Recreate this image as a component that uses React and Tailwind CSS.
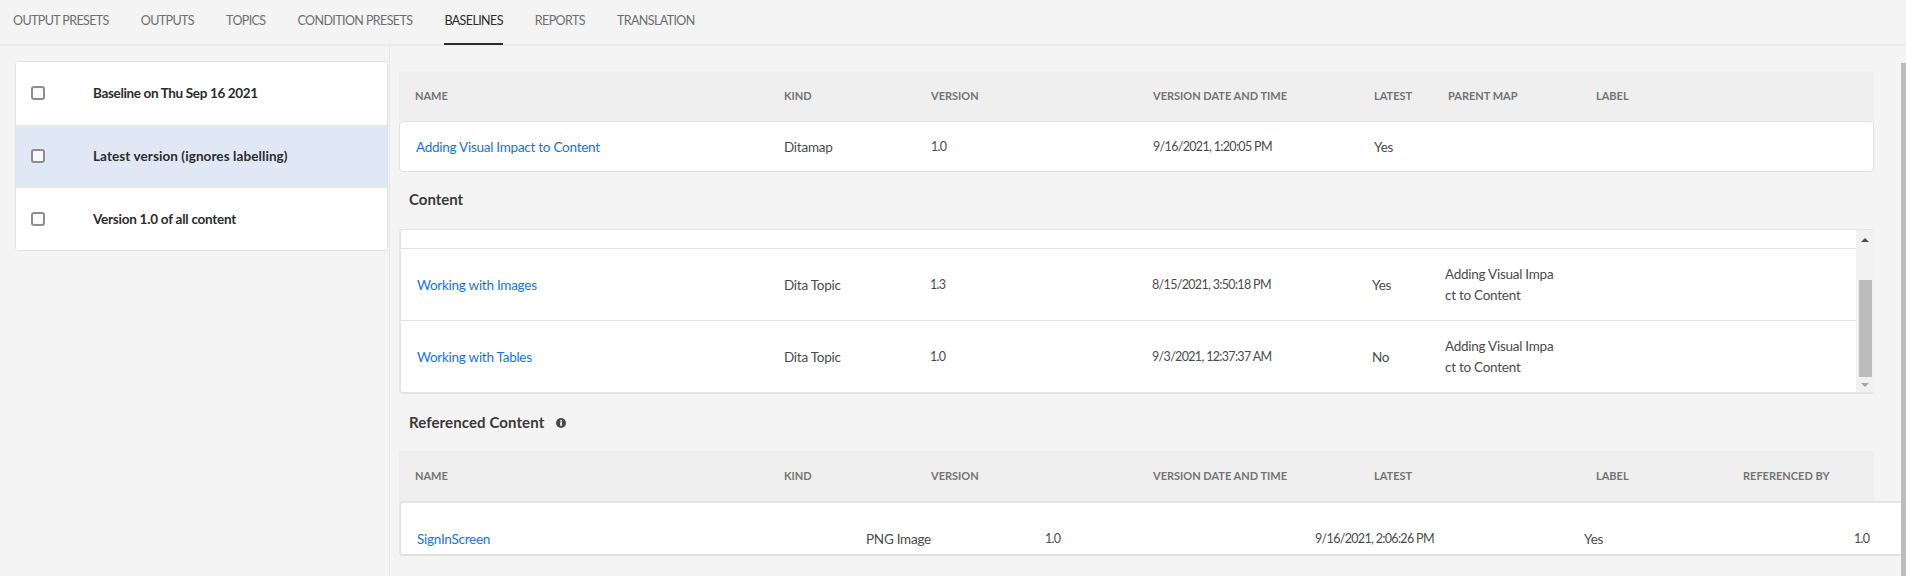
const F = { fontFamily: 'Lato, "Noto Sans", sans-serif' };

const tabs = ["OUTPUT PRESETS", "OUTPUTS", "TOPICS", "CONDITION PRESETS", "BASELINES", "REPORTS", "TRANSLATION"];
const baselines = [
  ["Baseline on Thu Sep 16 2021", false, "tracking-[-0.35px]"],
  ["Latest version (ignores labelling)", true, "tracking-[0.09px]"],
  ["Version 1.0 of all content", false, "tracking-[-0.24px]"],
];
const cols = "grid-cols-[369px_147px_222px_221px_74px_148px_147px_1fr]";

function Num({ children }) {
  return <div className="text-[12.5px] leading-[20px] tracking-[-0.67px]">{children}</div>;
}

function HeaderRow({ labels }) {
  return (
    <div className={`grid ${cols} mr-[27px] h-[50px] items-center bg-[#efefef] pl-[16px] text-[11px] font-bold text-[#747474]`}>
      {labels.map((l, i) => (
        <div key={i} className="min-w-0 whitespace-nowrap">{l}</div>
      ))}
    </div>
  );
}

function ContentRow({ name, kind, version, date, latest }) {
  return (
    <div className="grid h-[72px] grid-cols-[367px_146px_222px_220px_73px_120px] items-center border-b border-[#e1e1e1] pl-[16px] text-[13.5px] leading-[20px] tracking-[-0.26px] text-[#4b4b4b]">
      <a className="text-[#1473e6]">{name}</a>
      <div>{kind}</div>
      <Num>{version}</Num>
      <Num>{date}</Num>
      <div>{latest}</div>
      <div className="leading-[21px]">
        Adding Visual Impa
        <br />
        ct to Content
      </div>
    </div>
  );
}

export default function App() {
  return (
    <div className="flex h-[576px] w-full flex-col overflow-hidden bg-[#f4f4f4]" style={F}>
      <div className="flex h-[46px] shrink-0 gap-[32px] border-b-2 border-[#ebebeb] pl-[13px]">
        {tabs.map((t) => (
          <div
            key={t}
            className={`flex h-[45px] items-center border-b-2 pb-[1px] text-[12.5px] tracking-[-0.6px] ${t === "BASELINES" ? "border-[#2c2c2c] text-[#2c2c2c]" : "border-transparent text-[#6e6e6e]"}`}
          >
            {t}
          </div>
        ))}
      </div>
      <div className="flex min-h-0 flex-1">
        <div className="w-[390px] shrink-0 border-r border-[#e6e6e6] pl-[15px] pr-[1px] pt-[15px]">
          <div className="overflow-hidden rounded-[4px] border border-[#e1e1e1] bg-white">
            {baselines.map(([t, sel, track], i) => (
              <div
                key={t}
                className={`flex h-[62.67px] items-center gap-[48px] pl-[15px] text-[13.5px] font-bold text-[#2c2c2c] ${track} ${i > 0 ? "border-t border-[#e6e6e6]" : ""} ${sel ? "bg-[#e0e8f6]" : "bg-white"}`}
              >
                <span className="h-[14px] w-[14px] rounded-[3px] border-2 border-[#8e8e8e] bg-[#fafafa]" />
                <span>{t}</span>
              </div>
            ))}
          </div>
        </div>
        <div className="min-w-0 flex-1 pl-[9px] pt-[25px]">
          <HeaderRow labels={["NAME", "KIND", "VERSION", "VERSION DATE AND TIME", "LATEST", "PARENT MAP", "LABEL"]} />
          <div className="mr-[27px] grid h-[51px] grid-cols-[368px_147px_222px_221px_74px] items-center rounded-[4px] border border-[#e1e1e1] bg-white pl-[16px] text-[13.5px] leading-[20px] tracking-[-0.26px] text-[#4b4b4b]">
            <a className="text-[#1473e6]">Adding Visual Impact to Content</a>
            <div>Ditamap</div>
            <Num>1.0</Num>
            <Num>9/16/2021, 1:20:05 PM</Num>
            <div>Yes</div>
          </div>
          <h2 className="mb-[19px] ml-[10px] mt-[17px] text-[15px] font-bold leading-[21px] text-[#3a3a3a]">Content</h2>
          <div className="mr-[27px] flex h-[165px] overflow-hidden rounded-[4px] border-2 border-r-0 border-t border-[#e4e4e4] bg-white">
            <div className="min-w-0 flex-1">
              <div className="h-[19px] border-b border-[#e1e1e1]" />
              <ContentRow name="Working with Images" kind="Dita Topic" version="1.3" date="8/15/2021, 3:50:18 PM" latest="Yes" />
              <ContentRow name="Working with Tables" kind="Dita Topic" version="1.0" date="9/3/2021, 12:37:37 AM" latest="No" />
            </div>
            <div className="flex w-[18px] shrink-0 flex-col items-center bg-[#f1f1f1]">
              <div className="mt-[8px] h-0 w-0 border-x-[4px] border-b-[4px] border-x-transparent border-b-[#505050]" />
              <div className="mt-[38px] h-[97px] w-[13px] bg-[#bcbcbc]" />
              <div className="mt-[6px] h-0 w-0 border-x-[4px] border-t-[4px] border-x-transparent border-t-[#a3a3a3]" />
            </div>
          </div>
          <h2 className="mb-[18px] ml-[10px] mt-[18px] flex items-center gap-[12px] text-[15px] font-bold leading-[21px] tracking-[0.1px] text-[#3a3a3a]">
            Referenced Content
            <svg width="10" height="10" viewBox="0 0 10 10" aria-hidden="true">
              <circle cx="5" cy="5" r="5" fill="#4b4b4b" />
              <rect x="4.2" y="4.2" width="1.8" height="3.6" fill="#fff" />
              <rect x="4.2" y="2" width="1.8" height="1.5" fill="#fff" />
            </svg>
          </h2>
          <HeaderRow labels={["NAME", "KIND", "VERSION", "VERSION DATE AND TIME", "LATEST", "", "LABEL", "REFERENCED BY"]} />
          <div className="grid h-[55px] grid-cols-[449px_179px_270px_269px_270px_1fr] items-start rounded-l-[4px] border-y-2 border-l-2 border-[#e4e4e4] border-b-[#e1e1e1] bg-white pl-[16px] pt-[26px] text-[13.5px] leading-[20px] tracking-[-0.26px] text-[#4b4b4b]">
            <a className="text-[#1473e6]">SignInScreen</a>
            <div>PNG Image</div>
            <Num>1.0</Num>
            <Num>9/16/2021, 2:06:26 PM</Num>
            <div>Yes</div>
            <Num>1.0</Num>
          </div>
        </div>
        <div className="w-[5px] shrink-0">
          <div className="mt-[17px] h-full bg-[#bcbcbc]" />
        </div>
      </div>
    </div>
  );
}
